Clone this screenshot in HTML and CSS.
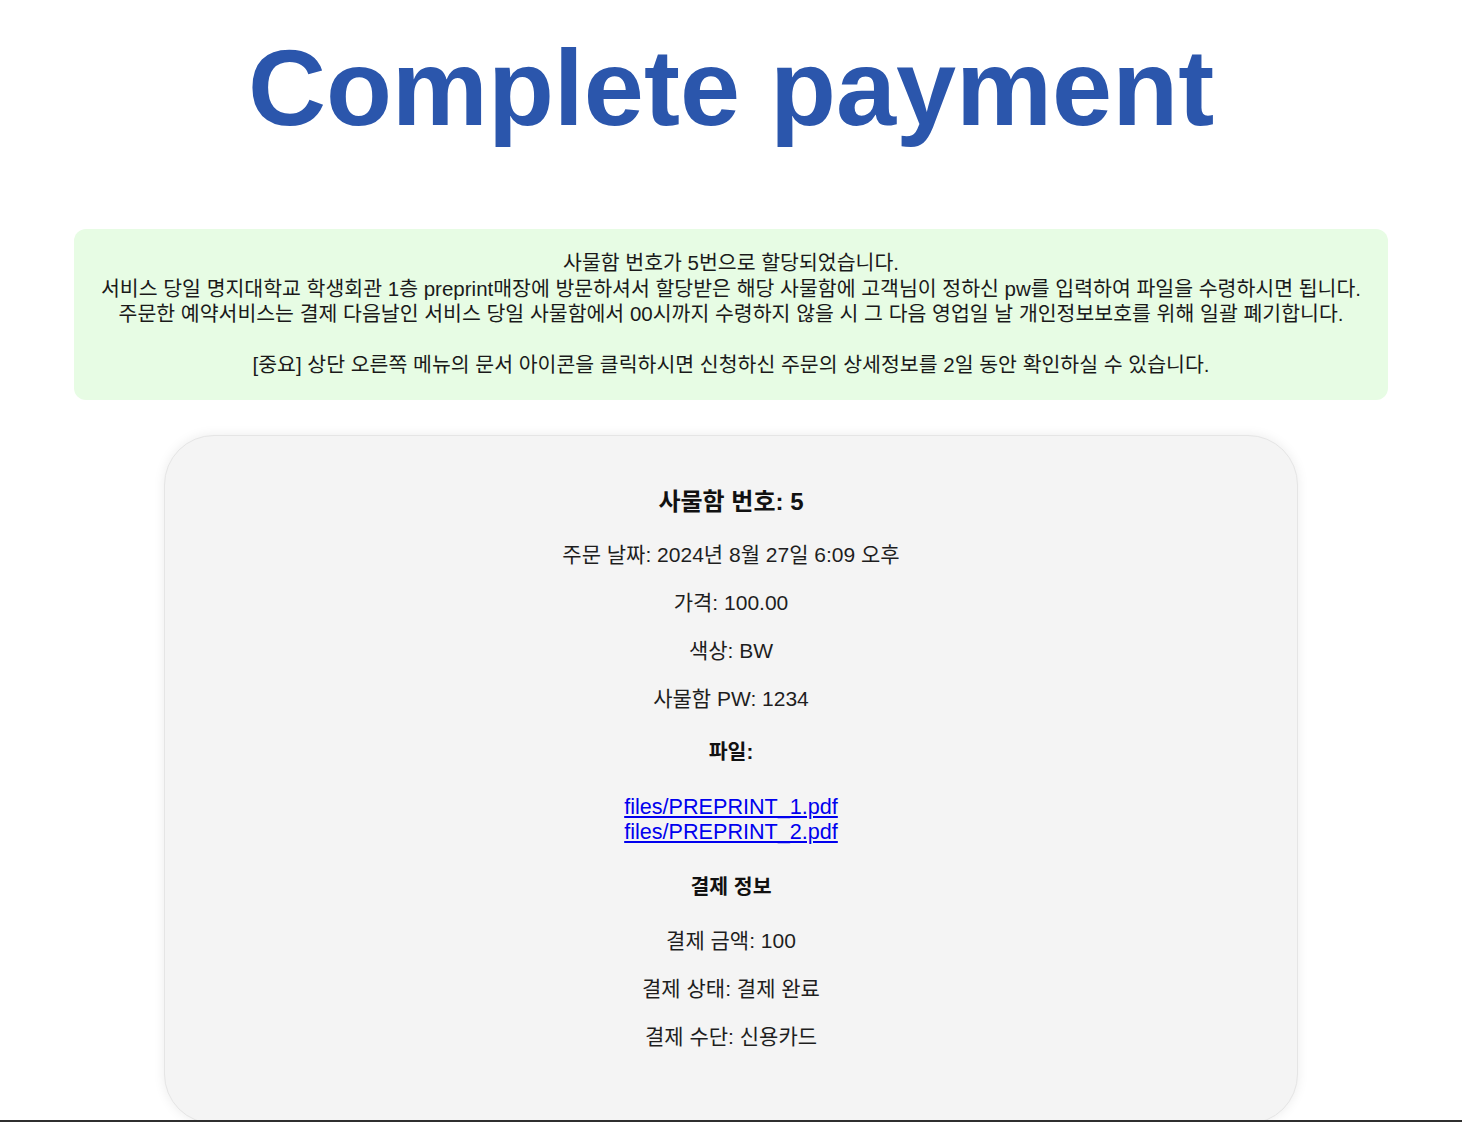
FILE: index.html
```html
<!DOCTYPE html>
<html lang="ko">
<head>
<meta charset="utf-8">
<title>Complete payment</title>
<link rel="stylesheet" href="styles.css">
</head>
<body>
<h1 class="title">Complete payment</h1>
<div class="notice">
사물함 번호가 5번으로 할당되었습니다.<br>
서비스 당일 명지대학교 학생회관 1층 preprint매장에 방문하셔서 할당받은 해당 사물함에 고객님이 정하신 pw를 입력하여 파일을 수령하시면 됩니다.<br>
주문한 예약서비스는 결제 다음날인 서비스 당일 사물함에서 00시까지 수령하지 않을 시 그 다음 영업일 날 개인정보보호를 위해 일괄 폐기합니다.<br>
<br>
[중요] 상단 오른쪽 메뉴의 문서 아이콘을 클릭하시면 신청하신 주문의 상세정보를 2일 동안 확인하실 수 있습니다.
</div>
<div class="card">
  <h3 class="card-title">사물함 번호: 5</h3>
  <p class="row">주문 날짜: 2024년 8월 27일 6:09 오후</p>
  <p class="row">가격: 100.00</p>
  <p class="row">색상: BW</p>
  <p class="row">사물함 PW: 1234</p>
  <h4 class="section">파일:</h4>
  <div class="files">
    <a class="file-link" href="#">files/PREPRINT_1.pdf</a><br>
    <a class="file-link" href="#">files/PREPRINT_2.pdf</a>
  </div>
  <h4 class="section">결제 정보</h4>
  <p class="row">결제 금액: 100</p>
  <p class="row">결제 상태: 결제 완료</p>
  <p class="row">결제 수단: 신용카드</p>
</div>
<div class="edge"></div>
</body>
</html>
```
FILE: styles.css
```css
html, body {
  margin: 0;
  padding: 0;
  background: #ffffff;
}

body {
  font-family: "Liberation Sans", "Noto Sans CJK KR", sans-serif;
  color: #1e1e1e;
  height: 1122px;
  overflow: hidden;
}

.title {
  margin: 28px 0 0;
  font-family: "Liberation Sans", Arial, sans-serif;
  font-weight: 700;
  font-size: 108px;
  line-height: 120px;
  color: #2b56ac;
  text-align: center;
}

.notice {
  box-sizing: border-box;
  width: 1314px;
  margin: 81px auto 0;
  padding: 21px 8px 22px;
  background: #e7fce4;
  border-radius: 12px;
  font-size: 20.5px;
  line-height: 25.5px;
  text-align: center;
  color: #1a1a1a;
}

.card {
  box-sizing: border-box;
  width: 1134px;
  margin: 35px auto 0;
  padding: 26px 20px 51px;
  background: #f4f4f4;
  border: 1px solid #e5e5e5;
  border-radius: 50px;
  box-shadow: 0 0 12px rgba(0, 0, 0, 0.08);
  text-align: center;
}

.card-title {
  margin: 25px 0 26px;
  font-size: 24px;
  line-height: 29px;
  font-weight: 700;
  color: #111;
}

.row {
  margin: 23px 0;
  font-size: 21px;
  line-height: 25px;
}

.section {
  margin: 28px 0 29px;
  font-size: 20.5px;
  line-height: 25px;
  font-weight: 700;
  color: #111;
}

.files {
  margin: 30px 0 30px;
  font-family: "Liberation Sans", Arial, sans-serif;
  font-size: 21.6px;
  line-height: 25px;
}

.file-link {
  color: #0000ee;
  text-decoration: underline;
}

.edge {
  position: fixed;
  left: 0;
  right: 0;
  bottom: 0;
  height: 2px;
  background: #2f2f2f;
}
```
